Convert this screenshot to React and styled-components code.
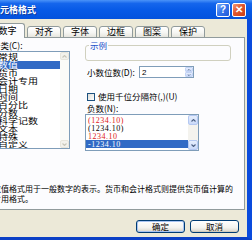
import React from 'react'
import styled, { createGlobalStyle } from 'styled-components'

const CJK = '"Noto Sans CJK SC", "Noto Sans", sans-serif'

const GlobalStyle = createGlobalStyle`
  html, body {
    margin: 0;
    padding: 0;
    background: #ECE9D8;
    overflow: hidden;
  }
`

const Screen = styled.div`
  width: 252px;
  height: 240px;
  overflow: hidden;
`

const Dialog = styled.div`
  width: 262px;
  height: 240px;
  margin-left: -10px;
  display: flex;
  flex-direction: column;
  background: #ECE9D8;
  font-family: ${CJK};
  color: #000;
`

const TitleBar = styled.div`
  height: 19px;
  flex: none;
  display: flex;
  align-items: center;
  padding: 0 6px 0 1px;
  background: linear-gradient(to bottom, #4A93F8 0%, #1566EC 18%, #0659E6 55%, #0352DD 100%);
`

const Title = styled.div`
  flex: 1;
  color: #fff;
  font-weight: bold;
  font-size: 9px;
  line-height: 12px;
  text-shadow: 1px 1px 0 #0B3A9E;
`

const CaptionButton = styled.div`
  width: 14px;
  height: 14px;
  box-sizing: border-box;
  border: 1px solid #fff;
  border-radius: 2px;
  display: flex;
  align-items: center;
  justify-content: center;
  background: ${p => (p.$close
    ? 'linear-gradient(135deg, #F39A78 0%, #E0562E 45%, #C93E18 100%)'
    : 'linear-gradient(135deg, #7EAEFB 0%, #3A78EC 45%, #2159D8 100%)')};
  color: #fff;
  font: bold 10px "Liberation Sans", sans-serif;

  & + & {
    margin-left: 2px;
  }
`

const Body = styled.div`
  flex: 1;
  display: flex;
  flex-direction: column;
  padding: 4px 2px 4px 0;
  border-right: 5px solid #0A4BDD;
  border-bottom: 3px solid #0B40C6;
`

const TabRow = styled.div`
  height: 15px;
  display: flex;
  align-items: flex-end;
  margin-bottom: -1px;
  position: relative;
  z-index: 1;
`

const Tab = styled.div`
  box-sizing: border-box;
  width: ${p => (p.$active ? 35 : 34)}px;
  height: ${p => (p.$active ? 15 : 12)}px;
  margin-left: ${p => (p.$active ? 0 : 2)}px;
  border: 1px solid #919B9C;
  border-bottom: ${p => (p.$active ? 'none' : '1px solid #919B9C')};
  border-radius: 3px 3px 0 0;
  background: ${p => (p.$active
    ? '#FCFCFE'
    : 'linear-gradient(to bottom, #FFFFFF 0%, #F6F6F3 55%, #E6E5DE 100%)')};
  font-size: 9px;
  line-height: ${p => (p.$active ? 13 : 10)}px;
  text-align: center;
`

const Panel = styled.div`
  height: 173px;
  box-sizing: border-box;
  border: 1px solid #919B9C;
  background: #FCFCFE;
  display: flex;
  flex-direction: column;
`

const TopRow = styled.div`
  display: flex;
  gap: 15px;
  padding-top: 1px;
`

const LeftColumn = styled.div`
  width: 79px;
  display: flex;
  flex-direction: column;
`

const Label = styled.div`
  font-size: 8.5px;
  line-height: ${p => p.$lh || 9}px;
  width: ${p => (p.$width ? `${p.$width}px` : 'auto')};
  flex: none;
  padding-left: ${p => p.$indent || 0}px;
  white-space: nowrap;
`

const ListBox = styled.div`
  box-sizing: border-box;
  height: ${p => p.$height}px;
  width: ${p => p.$width || 'auto'};
  margin-top: ${p => p.$top || 0}px;
  border: 1px solid #7F9DB9;
  background: #fff;
  display: flex;
`

const Items = styled.div`
  flex: 1;
  padding-top: 1px;
  overflow: hidden;
`

const Squeeze = styled.div`
  transform: scaleY(0.8);
  transform-origin: top left;
`

const CategoryItem = styled.div`
  height: 10px;
  line-height: 10px;
  font-size: 10px;
  padding-left: 6px;
  white-space: nowrap;
  background: ${p => (p.$selected ? '#316AC5' : 'transparent')};
  color: ${p => (p.$selected ? '#fff' : '#000')};
`

const NumberItem = styled.div`
  height: 8px;
  line-height: 8px;
  font: 8px "Liberation Serif", serif;
  letter-spacing: 0.5px;
  padding-left: 2px;
  white-space: nowrap;
  background: ${p => (p.$selected ? '#316AC5' : 'transparent')};
  color: ${p => (p.$selected ? '#fff' : p.$red ? '#E01818' : '#000')};
`

const ScrollBar = styled.div`
  width: ${p => p.$w}px;
  display: flex;
  flex-direction: column;
  justify-content: space-between;
  background: ${p => (p.$disabled ? '#FBFBF8' : '#F4F3EE')};
`

const ScrollButton = styled.div`
  height: ${p => p.$h}px;
  box-sizing: border-box;
  display: flex;
  align-items: center;
  justify-content: center;
  border: 1px solid ${p => (p.$disabled ? '#E8E6DC' : '#B4C8F2')};
  border-radius: 2px;
  background: ${p => (p.$disabled
    ? '#F3F2EC'
    : 'linear-gradient(to bottom, #E6EEFD 0%, #C9D9F9 100%)')};
`

const RightColumn = styled.div`
  width: 146px;
  display: flex;
  flex-direction: column;
`

const GroupBox = styled.div`
  position: relative;
  box-sizing: border-box;
  margin-top: 6px;
  height: 16px;
  border: 1px solid #D0D0BF;
  border-radius: 3px;
`

const GroupLegend = styled.span`
  position: absolute;
  top: -5px;
  left: 3px;
  padding: 0 1px;
  background: #FCFCFE;
  font-size: 8.5px;
  line-height: 9px;
  color: #1A4FC8;
`

const FieldRow = styled.div`
  display: flex;
  align-items: center;
  height: ${p => p.$h || 9}px;
  margin-top: ${p => p.$top || 0}px;
  padding-left: 2px;
`

const Spinner = styled.div`
  box-sizing: border-box;
  width: 55px;
  height: 12px;
  border: 1px solid #7F9DB9;
  background: #fff;
  display: flex;
  align-items: center;
  padding-left: 2px;
  font: 8px "Liberation Sans", sans-serif;
`

const SpinButtons = styled.div`
  margin-left: auto;
  width: 8px;
  height: 10px;
  display: flex;
  flex-direction: column;
`

const SpinPart = styled.div`
  flex: 1;
  display: flex;
  align-items: center;
  justify-content: center;
  background: linear-gradient(to bottom, #E6EEFD, #C6D7F8);
  border: 1px solid #C3D3F5;
  border-radius: 1px;
  box-sizing: border-box;
`

const CheckBox = styled.div`
  width: 8px;
  height: 8px;
  box-sizing: border-box;
  border: 1px solid #1C5180;
  background: linear-gradient(135deg, #DCDCD7, #FFFFFF);
  margin-right: 3px;
`

const Description = styled.div`
  margin-top: 33px;
  margin-left: 2px;
  font-size: 8px;
  line-height: 10px;

  span {
    display: block;
    white-space: nowrap;
  }
`

const ButtonRow = styled.div`
  display: flex;
  justify-content: flex-end;
  gap: 5px;
  margin-top: 10px;
  padding-right: 6px;
`

const Button = styled.div`
  box-sizing: border-box;
  width: 49px;
  height: 13px;
  border: 1px solid #003C74;
  border-radius: 3px;
  background: linear-gradient(to bottom, #FFFFFF 0%, #F3F3EF 60%, #D8D4CA 100%);
  box-shadow: ${p => (p.$default ? 'inset 0 0 0 1px #A8C4F2' : 'inset 0 -1px 0 #D0CBBE')};
  font-size: 8.5px;
  line-height: 11px;
  text-align: center;
`

const Chevron = ({ down, color = '#4D6185', w = 5, h = 3 }) => (
  <svg width={w} height={h} viewBox="0 0 5 3">
    <polyline
      points={down ? '0.5,0.5 2.5,2.5 4.5,0.5' : '0.5,2.5 2.5,0.5 4.5,2.5'}
      fill="none"
      stroke={color}
      strokeWidth="1.1"
    />
  </svg>
)

const categories = ['常规', '数值', '货币', '会计专用', '日期', '时间', '百分比', '分数', '科学记数', '文本', '特殊', '自定义']

const negatives = [
  { text: '(1234.10)', red: true },
  { text: '(1234.10)' },
  { text: '1234.10', red: true },
  { text: '-1234.10', selected: true },
]

const tabs = ['数字', '对齐', '字体', '边框', '图案', '保护']

export default function App() {
  return (
    <>
      <GlobalStyle />
      <Screen>
        <Dialog>
          <TitleBar>
            <Title>单元格格式</Title>
            <CaptionButton>?</CaptionButton>
            <CaptionButton $close>✕</CaptionButton>
          </TitleBar>
          <Body>
            <TabRow>
              {tabs.map((t, i) => (
                <Tab key={t} $active={i === 0}>{t}</Tab>
              ))}
            </TabRow>
            <Panel>
              <TopRow>
                <LeftColumn>
                  <Label $lh={12} $indent={1}>分类(C):</Label>
                  <ListBox $height={98}>
                    <Items>
                      <Squeeze>
                        {categories.map((c, i) => (
                          <CategoryItem key={c} $selected={i === 1}>{c}</CategoryItem>
                        ))}
                      </Squeeze>
                    </Items>
                    <ScrollBar $w={9} $disabled>
                      <ScrollButton $h={8} $disabled><Chevron color="#C9C7BA" /></ScrollButton>
                      <ScrollButton $h={8} $disabled><Chevron down color="#C9C7BA" /></ScrollButton>
                    </ScrollBar>
                  </ListBox>
                </LeftColumn>
                <RightColumn>
                  <GroupBox>
                    <GroupLegend>示例</GroupLegend>
                  </GroupBox>
                  <FieldRow $top={5} $h={12}>
                    <Label $width={52}>小数位数(D):</Label>
                    <Spinner>
                      2
                      <SpinButtons>
                        <SpinPart><Chevron w={4} h={2} /></SpinPart>
                        <SpinPart><Chevron down w={4} h={2} /></SpinPart>
                      </SpinButtons>
                    </Spinner>
                  </FieldRow>
                  <FieldRow $top={14}>
                    <CheckBox />
                    <Label>使用千位分隔符(,)(U)</Label>
                  </FieldRow>
                  <FieldRow $top={3}>
                    <Label>负数(N):</Label>
                  </FieldRow>
                  <ListBox $height={37} $width="114px" $top={1}>
                    <Items>
                      {negatives.map((n, i) => (
                        <NumberItem key={i} $red={n.red} $selected={n.selected}>
                          {n.text}
                        </NumberItem>
                      ))}
                    </Items>
                    <ScrollBar $w={10}>
                      <ScrollButton $h={10}><Chevron /></ScrollButton>
                      <ScrollButton $h={10}><Chevron down /></ScrollButton>
                    </ScrollBar>
                  </ListBox>
                </RightColumn>
              </TopRow>
              <Description>
                <span>数值格式用于一般数字的表示。货币和会计格式则提供货币值计算的</span>
                <span>专用格式。</span>
              </Description>
            </Panel>
            <ButtonRow>
              <Button $default>确定</Button>
              <Button>取消</Button>
            </ButtonRow>
          </Body>
        </Dialog>
      </Screen>
    </>
  )
}
